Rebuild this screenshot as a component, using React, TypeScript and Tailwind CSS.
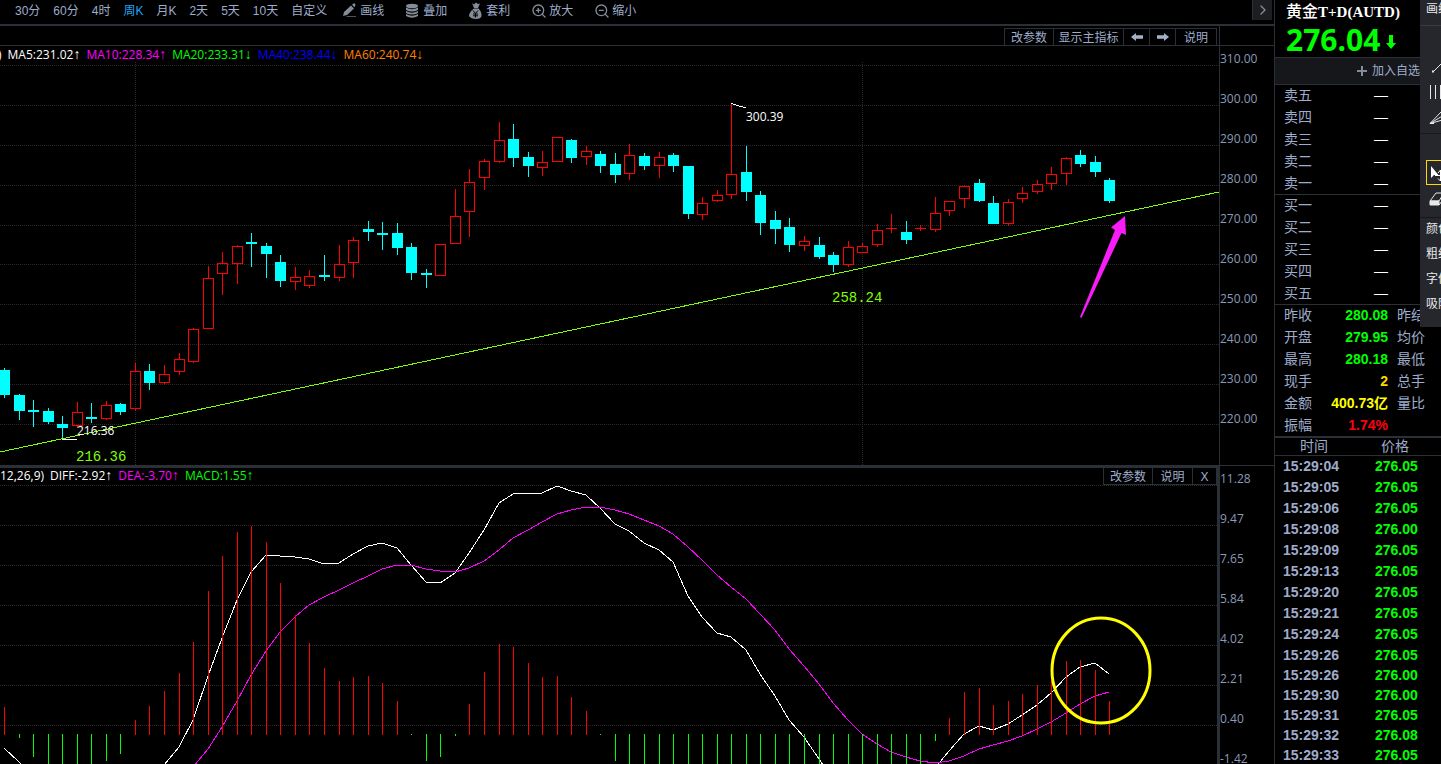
import { ChevronRight, ZoomIn, ZoomOut } from 'lucide-react';
import type { ReactNode } from 'react';

type Candle = [dir: 'up' | 'down', high: number, top: number, bottom: number, low: number];

// Plot coordinates: wick top, body top, body bottom, wick bottom
const CANDLES: Candle[] = [
  ['down', 368, 370, 395, 398], ['down', 394, 395, 411, 420], ['down', 400, 410, 412, 427],
  ['down', 408, 411, 422, 424], ['down', 416, 424, 428, 439], ['up', 402, 412, 426, 428],
  ['down', 403, 417, 419, 423], ['up', 401, 405, 419, 420], ['down', 403, 404, 412, 415],
  ['up', 363, 371, 409, 411], ['down', 364, 371, 383, 390], ['up', 365, 374, 383, 384],
  ['up', 353, 359, 372, 375], ['up', 328, 329, 362, 363], ['up', 266, 278, 329, 329],
  ['up', 252, 263, 274, 295], ['up', 245, 246, 264, 284], ['down', 233, 242, 244, 267],
  ['down', 243, 246, 254, 278], ['down', 255, 262, 281, 287], ['up', 267, 277, 282, 290],
  ['up', 270, 276, 286, 288], ['down', 255, 275, 277, 281], ['up', 245, 264, 278, 281],
  ['up', 237, 240, 263, 278], ['down', 221, 229, 232, 241], ['down', 222, 233, 235, 250],
  ['down', 223, 233, 248, 255], ['down', 243, 247, 273, 280], ['down', 269, 273, 275, 288],
  ['up', 244, 244, 276, 276], ['up', 189, 216, 244, 244], ['up', 169, 182, 212, 237],
  ['up', 159, 161, 178, 190], ['up', 122, 140, 162, 163], ['down', 124, 139, 158, 167],
  ['down', 152, 157, 166, 177], ['up', 151, 162, 168, 176], ['up', 137, 137, 162, 162],
  ['down', 139, 140, 158, 163], ['up', 146, 151, 157, 165], ['down', 151, 154, 166, 173],
  ['down', 153, 164, 175, 183], ['up', 144, 155, 174, 180], ['down', 153, 156, 166, 170],
  ['up', 152, 157, 166, 178], ['down', 153, 155, 166, 172], ['down', 166, 166, 214, 219],
  ['up', 197, 203, 215, 220], ['up', 190, 195, 201, 202], ['up', 103, 174, 195, 199],
  ['down', 146, 172, 192, 201], ['down', 191, 195, 223, 235], ['down', 211, 220, 229, 244],
  ['down', 218, 227, 245, 252], ['up', 236, 241, 246, 251], ['down', 237, 245, 257, 259],
  ['down', 252, 255, 265, 272], ['up', 241, 247, 265, 267], ['up', 243, 246, 253, 253],
  ['up', 224, 230, 245, 247], ['up', 214, 228, 229, 233], ['down', 221, 232, 240, 244],
  ['up', 225, 228, 229, 231], ['up', 197, 213, 230, 232], ['up', 201, 201, 211, 216],
  ['up', 185, 186, 199, 208], ['down', 179, 183, 201, 202], ['down', 196, 203, 224, 224],
  ['up', 199, 202, 224, 226], ['up', 187, 193, 199, 203], ['up', 180, 184, 192, 194],
  ['up', 167, 174, 184, 190], ['up', 157, 158, 174, 185], ['down', 150, 155, 164, 167],
  ['down', 156, 162, 172, 177], ['down', 178, 180, 201, 203],
];

// End of every MACD bar; above the zero line is red, below is green
const ZERO = 734;
const BARS = [
  707, 738, 757, 790, 790, 790, 790, 761, 754, 720, 706, 691, 673, 642, 591, 556, 532, 526, 542,
  583, 615, 643, 668, 681, 677, 676, 683, 701, 735, 761, 757, 736, 704, 672, 644, 647, 663, 677,
  676, 697, 711, 735, 761, 790, 790, 790, 790, 790, 790, 790, 790, 790, 790, 790, 790, 790, 790,
  790, 790, 790, 790, 790, 790, 790, 741, 718, 692, 688, 705, 701, 694, 685, 681, 661, 660, 670,
  701,
];

const DIFF = [
  748, 762, 780, 800, 820, 830, 835, 830, 820, 805, 785, 765, 747, 720, 676, 638, 600, 572, 555,
  556, 557, 559, 564, 563, 554, 546, 543, 548, 565, 582, 583, 573, 553, 530, 503, 494, 493, 493,
  486, 491, 495, 508, 524, 531, 543, 550, 562, 596, 617, 633, 637, 650, 674, 696, 720, 737, 759,
  780, 800, 820, 830, 830, 810, 785, 768, 751, 734, 726, 730, 724, 715, 705, 693, 677, 667, 663,
  674,
];

const DEA = [
  790, 800, 800, 800, 800, 800, 800, 800, 800, 800, 800, 790, 778, 767, 749, 727, 701, 675, 651,
  632, 617, 605, 597, 590, 583, 576, 569, 565, 565, 569, 571, 572, 568, 561, 550, 538, 530, 522,
  514, 510, 507, 507, 510, 514, 520, 526, 534, 547, 560, 575, 587, 599, 614, 630, 649, 666, 684,
  703, 720, 734, 744, 752, 757, 761, 763, 761, 756, 749, 745, 741, 736, 729, 722, 713, 704, 696,
  692,
];

const PRICE_TICKS = ['310.00', '300.00', '290.00', '280.00', '270.00', '260.00', '250.00', '240.00', '230.00', '220.00'];
const MACD_TICKS = ['11.28', '9.47', '7.65', '5.84', '4.02', '2.21', '0.40', '-1.42'];
const PRICE_GRID = [65, 105, 145, 185, 225, 264, 304, 344, 384, 424];
const MACD_GRID = [485, 525, 565, 605, 645, 685, 725];

const PERIODS = ['30分', '60分', '4时', '周K', '月K', '2天', '5天', '10天', '自定义'];
const ASKS = ['卖五', '卖四', '卖三', '卖二', '卖一'];
const BIDS = ['买一', '买二', '买三', '买四', '买五'];

const STATS = [
  { label: '昨收', value: '280.08', color: 'text-[#00ff00]', other: '昨结' },
  { label: '开盘', value: '279.95', color: 'text-[#00ff00]', other: '均价' },
  { label: '最高', value: '280.18', color: 'text-[#00ff00]', other: '最低' },
  { label: '现手', value: '2', color: 'text-[#ffd800]', other: '总手' },
  { label: '金额', value: '400.73亿', color: 'text-[#ffff00]', other: '量比' },
  { label: '振幅', value: '1.74%', color: 'text-[#ff0010]', other: '' },
];

const TRADES = [
  ['15:29:04', '276.05'], ['15:29:05', '276.05'], ['15:29:06', '276.05'], ['15:29:08', '276.00'],
  ['15:29:09', '276.05'], ['15:29:13', '276.05'], ['15:29:20', '276.05'], ['15:29:21', '276.05'],
  ['15:29:24', '276.05'], ['15:29:26', '276.05'], ['15:29:26', '276.00'], ['15:29:30', '276.00'],
  ['15:29:31', '276.05'], ['15:29:32', '276.08'], ['15:29:33', '276.05'],
];

const barX = (i: number) => Math.round(4 + i * 14.545);
const toPoints = (ys: number[]) => ys.map((y, i) => `${barX(i)},${y}`).join(' ');

function PencilIcon() {
  return (
    <svg className="w-4 h-4" viewBox="0 0 16 16" fill="#848b99">
      <path d="M1 13 2 9 9 2.500 12 5.500 5 12ZM10 1.700 11.500 0.500Q12.500 0 13.300 1 14 2 13 3L12.700 4.500Z" />
      <path d="M5 13h9v1H4z" opacity="0.6" />
    </svg>
  );
}

function StackIcon() {
  return (
    <svg className="w-4 h-4" viewBox="0 0 16 16" fill="#848b99">
      <ellipse cx="7" cy="3" rx="6" ry="2.300" />
      <path d="M1 4.500Q7 8 13 4.500V7Q7 10 1 7ZM1 8Q7 11.500 13 8v2Q7 13 1 10ZM1 11Q7 14.500 13 11v2Q7 16.500 1 13Z" />
    </svg>
  );
}

function MoneyBagIcon() {
  return (
    <svg className="w-4 h-[18px]" viewBox="0 0 16 18">
      <path d="M4 1 6 2.500 8 .5 10 2 12 1.500 10 6H6ZM6 6.500h4.500Q14 10 13.500 14 13 17 8 17T1 14Q1 10 6 6.500Z" fill="#848b99" />
      <path d="M5 8.500 7.500 11.500 10 8.500M7.500 11.500V15.500M5 12h5M5 13.800h5" stroke="#000" strokeWidth="1" fill="none" />
    </svg>
  );
}

function ArrowIcon({ left = false }: { left?: boolean }) {
  return (
    <svg className="w-3 h-2.5" viewBox="0 0 12 10" fill="#a4b0ca">
      {left ? <path d="M0 5 5 1V3.200H12V6.800H5V9Z" /> : <path d="M12 5 7 1V3.200H0V6.800H7V9Z" />}
    </svg>
  );
}

function ToolButton({ icon, children }: { icon: ReactNode; children: ReactNode }) {
  return (
    <button type="button" className="flex items-center gap-0.5">
      {icon}
      {children}
    </button>
  );
}

function Axis({ ticks }: { ticks: string[] }) {
  return (
    <div className="flex flex-col gap-5 text-[#8a9ab8] text-xs leading-5 font-['Open_Sans',sans-serif]">
      {ticks.map((tick) => (
        <span key={tick}>{tick}</span>
      ))}
    </div>
  );
}

function Legend({ color, arrow, children }: { color: string; arrow: string; children: ReactNode }) {
  return (
    <span className={color}>
      {children}
      <span className="text-sm leading-none font-['Liberation_Sans',sans-serif]">{arrow}</span>
    </span>
  );
}

function Grid({ rows, width }: { rows: number[]; width: number }) {
  return (
    <g stroke="#28282d" strokeDasharray="1 1">
      {rows.map((y) => (
        <line key={y} x1="0" x2={width} y1={y + 0.5} y2={y + 0.5} />
      ))}
    </g>
  );
}

function PriceChart() {
  return (
    <svg className="block w-full h-auto" viewBox="0 62 1219 403" shapeRendering="crispEdges">
      <Grid rows={PRICE_GRID} width={1219} />
      <g stroke="#28282d" strokeDasharray="1 1">
        <line x1="135.5" x2="135.5" y1="62" y2="465" />
        <line x1="862.5" x2="862.5" y1="62" y2="465" />
      </g>
      {CANDLES.map(([dir, high, top, bottom, low], i) => {
        const x = barX(i);
        const color = dir === 'up' ? '#ff0000' : '#00ffff';
        return (
          <g key={i}>
            <rect x={x} y={high} width="1" height={top - high} fill={color} />
            <rect x={x} y={bottom} width="1" height={low - bottom} fill={color} />
            {dir === 'down' || bottom - top < 2 ? (
              <rect x={x - 5} y={top} width="11" height={bottom - top} fill={color} />
            ) : (
              <rect x={x - 4.5} y={top + 0.5} width="10" height={bottom - top - 1} fill="none" stroke={color} />
            )}
          </g>
        );
      })}
      <line x1="0" y1="452" x2="1219" y2="192" stroke="#80ff00" />
      <path d="M62 439.500H77M731 103.500 746 108" stroke="#fff" fill="none" />
      <g fill="#fff" fontSize="12" className="font-['Open_Sans',sans-serif]">
        <text x="77" y="435">216.36</text>
        <text x="746" y="121">300.39</text>
      </g>
      <g fill="#80ff00" fontSize="14" className="font-['Liberation_Mono',monospace]">
        <text x="76" y="461">216.36</text>
        <text x="832" y="302">258.24</text>
      </g>
      <path
        d="M1125 216 1111 227.500 1115 230 1080 317 1081.500 318 1121.500 233 1126 235Z"
        fill="#f81cf8"
        shapeRendering="auto"
      />
    </svg>
  );
}

function MacdChart() {
  return (
    <svg className="block w-full h-auto" viewBox="0 485 1217 279" shapeRendering="crispEdges">
      <Grid rows={MACD_GRID} width={1217} />
      <polyline points={toPoints(DIFF)} fill="none" stroke="#fff" />
      <polyline points={toPoints(DEA)} fill="none" stroke="#ff00ff" />
      {BARS.map((y, i) =>
        y < ZERO ? (
          <rect key={i} x={barX(i)} y={y} width="1" height={ZERO + 1 - y} fill="#ff0000" />
        ) : (
          <rect key={i} x={barX(i)} y={ZERO} width="1" height={y - ZERO} fill="#00ff00" />
        )
      )}
      <ellipse cx="1101" cy="670.5" rx="49" ry="52.5" fill="none" stroke="#ffff00" strokeWidth="3" shapeRendering="auto" />
    </svg>
  );
}

function DepthRows({ rows }: { rows: string[] }) {
  return (
    <ul className="border-b border-[#2b2f36] pl-[9px] leading-5">
      {rows.map((row) => (
        <li key={row} className="grid grid-cols-[28px_76px] h-[22px] last:h-[21px]">
          <span>{row}</span>
          <span className="text-right text-white">—</span>
        </li>
      ))}
    </ul>
  );
}

function DrawingTools() {
  return (
    <div className="absolute top-0 right-0 w-[21px] bg-[#26272c] text-[#e8e8e8] text-xs overflow-hidden whitespace-nowrap">
      <div className="h-[26px] pl-[6px] leading-[18px] border-b border-[#3a3b40]">画线</div>
      <div className="h-[108px] pt-8 border-b border-[#17181b]">
        <button type="button" aria-label="线段" className="block h-6 pl-3">
          <svg className="w-6 h-6" viewBox="0 0 24 24" stroke="#e8e8e8" fill="#e8e8e8">
            <path d="M1 14 14 1" />
            <rect x="0.5" y="13" width="1" height="1" />
          </svg>
        </button>
        <button type="button" aria-label="平行线" className="block h-6 pl-2">
          <svg className="w-6 h-6" viewBox="0 0 24 24" stroke="#e8e8e8" shapeRendering="crispEdges">
            <path d="M2.500 -3V11M7.500 -3V11M12.500 -3V11" transform="translate(0 6)" />
          </svg>
        </button>
        <button type="button" aria-label="扇形线" className="block h-6 pl-2">
          <svg className="w-6 h-6" viewBox="0 0 24 24" stroke="#e8e8e8" fill="none">
            <path d="M2 17.500 14 5M2 17.500 16 9M2 17.500 18 13M2 17.500H6" />
          </svg>
        </button>
      </div>
      <div className="h-[84px] pt-[26px] pl-1.5 border-b border-[#17181b]">
        <button type="button" aria-label="选择" className="block h-[25px] border border-[#ffd800]">
          <svg className="w-6 h-6" viewBox="0 0 24 24" fill="#fff">
            <path d="M4 5V17L7 14H11.500Z" />
            <path d="M13.500 9V20M8 14.500H19M11 12 13.500 9 16 12M11 17.500 13.500 20 16 17.500" stroke="#fff" fill="none" />
          </svg>
        </button>
        <button type="button" aria-label="橡皮" className="block pl-0.5 pt-1">
          <svg className="w-6 h-6" viewBox="0 0 24 24" stroke="#e8e8e8" fill="none">
            <path d="M2 12 8 4H16L11 12Z" />
            <path d="M2 12H11V16H2ZM11 16 17 8" fill="#e8e8e8" />
          </svg>
        </button>
      </div>
      <div className="flex flex-col pb-[9px] items-start pl-[6px]">
        {['颜色', '粗细', '字体', '吸附'].map((name) => (
          <button key={name} type="button" className="h-[25px] leading-5 pb-1">{name}</button>
        ))}
      </div>
    </div>
  );
}

export default function App() {
  return (
    <div className="relative flex h-screen overflow-hidden bg-black text-[#9faccb] text-xs font-['Liberation_Sans','Noto_Sans_CJK_SC',sans-serif]">
      <main className="flex-1 min-w-0">
        <header className="flex items-center h-[26px] pb-0.5 pl-[15px] border-b-2 border-[#2b2f36] whitespace-nowrap">
          <nav className="flex gap-[13px]">
            {PERIODS.map((period) => (
              <button key={period} type="button" className={period === '周K' ? 'text-[#1ea5f5]' : ''}>
                {period}
              </button>
            ))}
          </nav>
          <div className="flex gap-[21px] ml-[15px]">
            <ToolButton icon={<PencilIcon />}>画线</ToolButton>
            <ToolButton icon={<StackIcon />}>叠加</ToolButton>
            <ToolButton icon={<MoneyBagIcon />}>套利</ToolButton>
            <ToolButton icon={<ZoomIn className="w-4 h-4 text-[#848b99]" />}>放大</ToolButton>
            <ToolButton icon={<ZoomOut className="w-4 h-4 text-[#848b99]" />}>缩小</ToolButton>
          </div>
          <button type="button" aria-label="更多" className="flex items-center justify-center self-start ml-auto mr-0.5 w-5 h-5 bg-[#1d1e22] border-l border-[#2b2f36]">
            <ChevronRight className="w-4 h-4 text-[#848b99]" />
          </button>
        </header>

        <div className="flex h-5 border-b border-[#2b2f36]">
          <div className="flex-1 flex justify-end pt-0.5 pr-0.5">
            <div className="flex border-t border-r border-[#2b2f36] divide-x divide-[#2b2f36] leading-[18px]">
              <button type="button" className="w-[50px] border-l border-[#2b2f36]">改参数</button>
              <button type="button" className="w-[70px]">显示主指标</button>
              <button type="button" aria-label="上一个" className="flex items-center justify-center w-[26px]"><ArrowIcon left /></button>
              <button type="button" aria-label="下一个" className="flex items-center justify-center w-[26px]"><ArrowIcon /></button>
              <button type="button" className="w-10">说明</button>
            </div>
          </div>
          <div className="w-[55px] border-l border-[#2b2f36]"></div>
        </div>

        {/* Candles */}
        <section className="flex">
          <div className="flex-1 min-w-0">
            <div className="flex gap-[6px] h-4 -ml-0.5 leading-[18px] whitespace-nowrap font-['Open_Sans',sans-serif]">
              <span className="text-white">)</span>
              <Legend color="text-white" arrow="↑">MA5:231.02</Legend>
              <Legend color="text-[#ff00ff]" arrow="↑">MA10:228.34</Legend>
              <Legend color="text-[#00ff00]" arrow="↓">MA20:233.31</Legend>
              <Legend color="text-[#0000ff]" arrow="↓">MA40:238.44</Legend>
              <Legend color="text-[#ff8000]" arrow="↓">MA60:240.74</Legend>
            </div>
            <PriceChart />
          </div>
          <div className="w-[55px] pt-[3px] border-l border-[#2b2f36]">
            <Axis ticks={PRICE_TICKS} />
          </div>
        </section>

        {/* MACD */}
        <section className="flex">
          <div className="flex-1 min-w-0 border-t-3 border-r-2 border-[#2b2f36]">
            <div className="flex justify-between h-[17px]">
              <div className="flex gap-[6px] leading-4 whitespace-nowrap font-['Open_Sans',sans-serif]">
                <span className="text-white">12,26,9)</span>
                <Legend color="text-white" arrow="↑">DIFF:-2.92</Legend>
                <Legend color="text-[#ff00ff]" arrow="↑">DEA:-3.70</Legend>
                <Legend color="text-[#00ff00]" arrow="↑">MACD:1.55</Legend>
              </div>
              <div className="flex border border-t-0 border-[#2b2f36] divide-x divide-[#2b2f36] leading-[18px]">
                <button type="button" className="w-[49px]">改参数</button>
                <button type="button" className="w-10">说明</button>
                <button type="button" className="w-[23px]">X</button>
              </div>
            </div>
            <MacdChart />
          </div>
          <div className="w-[55px] pt-[3px] border-l border-t border-[#2b2f36]">
            <Axis ticks={MACD_TICKS} />
          </div>
        </section>
      </main>

      <aside className="w-[167px] shrink-0 border-l border-[#2b2f36] text-sm leading-[22px]">
        <div className="h-[57px] pl-[11px] whitespace-nowrap">
          <h1 className="text-base leading-6 text-white font-medium">
            黄金<span className="text-[15px] font-bold font-['Liberation_Serif',serif]">T+D(AUTD)</span>
          </h1>
          <div className="flex items-center gap-1.5 text-[#00ff00]">
            <span className="text-[30px] leading-8 font-bold font-['Open_Sans',sans-serif]">276.04</span>
            <svg className="w-2.5 h-3.5 mt-1" viewBox="0 0 10 14" fill="#00ff00">
              <path d="M3 0H7V8H10L5 14 0 8H3Z" />
            </svg>
          </div>
        </div>
        <button type="button" className="flex items-center justify-end gap-1 w-full h-7 pr-[21px] bg-[#15171a] border-y border-[#2b2f36] text-xs">
          <svg className="w-3 h-3" viewBox="0 0 12 12" fill="#848b99">
            <path d="M5 1H7V5H11V7H7V11H5V7H1V5H5Z" />
          </svg>
          加入自选
        </button>

        <DepthRows rows={ASKS} />
        <DepthRows rows={BIDS} />

        <dl className="border-b-2 border-[#2b2f36] pl-[9px] -mt-px">
          {STATS.map((stat) => (
            <div key={stat.label} className="grid grid-cols-[28px_76px_37px] h-[22px] whitespace-nowrap">
              <dt>{stat.label}</dt>
              <dd className={`text-right font-bold ${stat.color}`}>{stat.value}</dd>
              <dt className="pl-[9px]">{stat.other}</dt>
            </div>
          ))}
        </dl>

        <table className="w-full table-fixed text-left">
          <thead className="border-b border-[#2b2f36] leading-[17px]">
            <tr>
              <th className="w-[100px] pl-[25px] font-normal">时间</th>
              <th className="pl-1.5 font-normal">价格</th>
            </tr>
          </thead>
          <tbody className="leading-5 font-bold">
            {TRADES.map(([time, price], i) => (
              <tr key={i} className={i < 9 ? 'h-[21px]' : 'h-5'}>
                <td className="pl-2">{time}</td>
                <td className="text-[#00ff00]">{price}</td>
              </tr>
            ))}
          </tbody>
        </table>
      </aside>

      <DrawingTools />
    </div>
  );
}
